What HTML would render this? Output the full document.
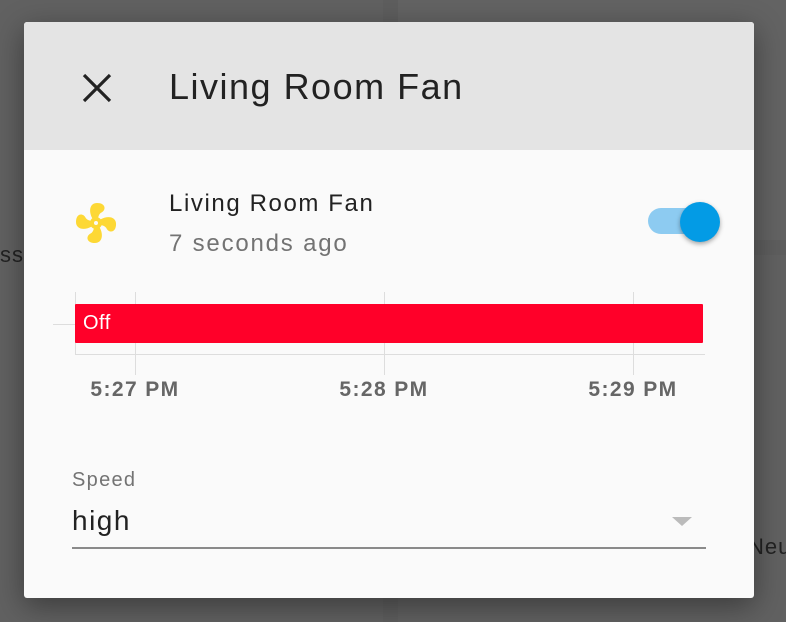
<!DOCTYPE html>
<html><head><style>
body{margin:0;width:786px;height:622px;background:#5e5e5e;position:relative;overflow:hidden;font-family:"Liberation Sans",sans-serif}
.a{position:absolute}
</style></head><body>
<div class="a" style="left:0;top:0;width:383px;height:622px;background:#616161"></div>
<div class="a" style="left:398px;top:0;width:388px;height:240px;background:#636363"></div>
<div class="a" style="left:398px;top:255px;width:388px;height:367px;background:#616161"></div>
<div class="a" style="left:0;top:242px;font-size:22px;color:#222;letter-spacing:1px">ss</div>
<div class="a" style="left:748px;top:534px;font-size:22px;color:#222;letter-spacing:1px">Neu</div>
<div class="a" style="left:24px;top:22px;width:730px;height:576px;background:#fafafa;border-radius:3px;box-shadow:0 8px 30px rgba(0,0,0,.4);overflow:hidden">
 <div class="a" style="left:0;top:0;width:730px;height:128px;background:#e4e4e4"></div>
 <svg class="a" style="left:58px;top:51px" width="30" height="30" viewBox="0 0 30 30"><path d="M2 2L28 28M28 2L2 28" stroke="#222" stroke-width="3.2"/></svg>
 <div class="a" style="left:145px;top:44px;font-size:36px;color:#222;letter-spacing:1.5px">Living Room Fan</div>
 <svg class="a" style="left:48px;top:177px" width="48" height="48" viewBox="0 0 24 24"><path fill="#fdd835" d="M12,11A1,1 0 0,0 11,12A1,1 0 0,0 12,13A1,1 0 0,0 13,12A1,1 0 0,0 12,11M12.5,2C17,2 17.11,5.57 14.75,6.75C13.760,7.24 13.32,8.29 13.13,9.22C13.61,9.42 14.03,9.73 14.35,10.13C18.05,8.13 22.03,8.92 22.03,12.5C22.03,17 18.46,17.1 17.28,14.73C16.78,13.74 15.72,13.3 14.790,13.11C14.59,13.59 14.28,14 13.88,14.34C15.87,18.030 15.08,22 11.5,22C7,22 6.91,18.42 9.27,17.24C10.25,16.75 10.69,15.71 10.89,14.79C10.4,14.59 9.97,14.27 9.65,13.87C5.96,15.85 2,15.07 2,11.5C2,7 5.56,6.89 6.74,9.26C7.24,10.25 8.29,10.68 9.22,10.87C9.41,10.39 9.73,9.97 10.14,9.65C8.15,5.96 8.94,2 12.5,2Z"/></svg>
 <div class="a" style="left:145px;top:168px;font-size:24px;color:#222;letter-spacing:1.6px">Living Room Fan</div>
 <div class="a" style="left:145px;top:208px;font-size:24px;color:#737373;letter-spacing:1.8px">7 seconds ago</div>
 <div class="a" style="left:624px;top:186px;width:64px;height:26px;border-radius:13px;background:#8dcbf1"></div>
 <div class="a" style="left:656px;top:180px;width:40px;height:40px;border-radius:50%;background:#039be5;box-shadow:0 2px 5px rgba(0,0,0,.35)"></div>
 <div class="a" style="left:29px;top:302px;width:22px;height:1px;background:#ddd"></div>
 <div class="a" style="left:51px;top:332px;width:630px;height:1px;background:#ddd"></div>
 <div class="a" style="left:51px;top:270px;width:1px;height:63px;background:#ddd"></div>
 <div class="a" style="left:111px;top:270px;width:1px;height:83px;background:#ddd"></div>
 <div class="a" style="left:360px;top:270px;width:1px;height:83px;background:#ddd"></div>
 <div class="a" style="left:609px;top:270px;width:1px;height:83px;background:#ddd"></div>
 <div class="a" style="left:51px;top:282px;width:628px;height:39px;background:#ff0029;border-radius:1px"></div>
 <div class="a" style="left:59px;top:290px;font-size:20px;color:#fff;letter-spacing:0.5px">Off</div>
 <div class="a" style="left:41px;top:356px;width:140px;text-align:center;font-size:21px;font-weight:bold;color:#666;letter-spacing:1.4px">5:27 PM</div>
 <div class="a" style="left:290px;top:356px;width:140px;text-align:center;font-size:21px;font-weight:bold;color:#666;letter-spacing:1.4px">5:28 PM</div>
 <div class="a" style="left:539px;top:356px;width:140px;text-align:center;font-size:21px;font-weight:bold;color:#666;letter-spacing:1.4px">5:29 PM</div>
 <div class="a" style="left:48px;top:447px;font-size:20px;color:#737373;letter-spacing:1.3px">Speed</div>
 <div class="a" style="left:48px;top:483px;font-size:28px;color:#222;letter-spacing:1.5px">high</div>
 <div class="a" style="left:648px;top:495px;width:0;height:0;border-left:10px solid transparent;border-right:10px solid transparent;border-top:9px solid #bbb"></div>
 <div class="a" style="left:48px;top:525px;width:634px;height:2px;background:#8a8a8a"></div>
</div>
</body></html>
